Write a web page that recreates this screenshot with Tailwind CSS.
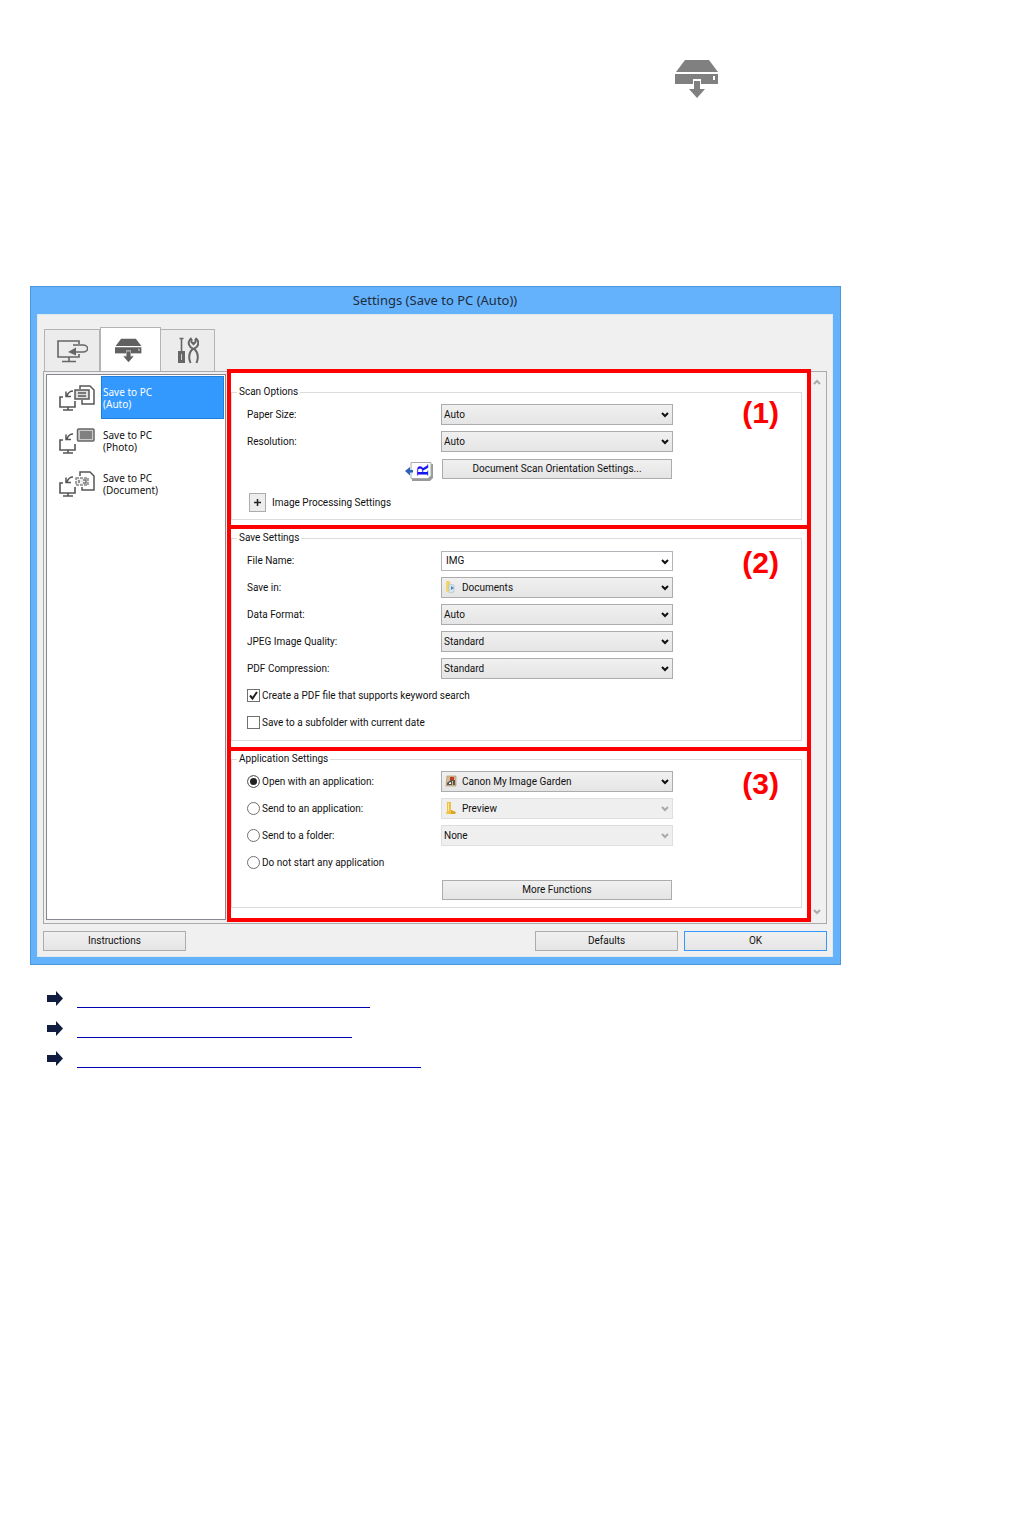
<!DOCTYPE html>
<html lang="en">
<head>
  <meta charset="UTF-8" />
  <meta name="viewport" content="width=device-width, initial-scale=1.0"/>
  <title>Settings (Save to PC (Auto))</title>
  <script src="https://cdn.jsdelivr.net/npm/@tailwindcss/browser@4"></script>
</head>
<body class="bg-white min-h-screen px-[30px] pt-[59px] font-[Roboto,sans-serif] text-[10px] leading-3 text-[#111]">

  <!-- Shared icons -->
  <svg class="hidden" aria-hidden="true">
    <symbol id="scanner" viewBox="0 0 44 39">
      <path fill="#808080" d="M10 1h24l9 12H1z"/>
      <path fill="#808080" d="M0 15h43v10H0z"/>
      <path fill="#fff" d="M38 17h2v4h-2zM18 20h8v9h5l-9 11-9-11h5z"/>
      <path fill="#808080" d="M19 22h6v8h5l-8 9-8-9h5z"/>
    </symbol>
    <symbol id="chevron" viewBox="0 0 8 6">
      <path fill="none" stroke="currentColor" stroke-width="2" d="M1 1l3 3 3-3"/>
    </symbol>
    <symbol id="pc" viewBox="0 0 36 26">
      <path fill="none" stroke="#555" stroke-width="1.6" d="M4 12H1v10h15v-6M9 22v3M4 25h10"/>
      <path fill="none" stroke="#555" stroke-width="1.5" d="M14 6c-3 0-5 2-6 5M7 6.500v5h5"/>
    </symbol>
    <symbol id="arrow" viewBox="0 0 16 15">
      <path fill="#101c40" d="M0 4h9V0l7 7.500L9 15v-4H0z"/>
    </symbol>
  </svg>

  <header class="w-full max-w-[811px] flex justify-end pr-[122px]">
    <svg class="w-11 h-[39px]" role="img" aria-label="Scanner"><use href="#scanner"/></svg>
  </header>

  <!-- Settings dialog -->
  <main class="mt-[188px] w-full max-w-[811px] bg-[#64b1fc] border border-[#4a97da] pl-1.5 pr-[7px] pb-[7px]">
    <h1 class="h-[27px] text-center font-['Noto_Sans',sans-serif] text-[13px] leading-[26px] text-[#1f2d3d]">Settings (Save to PC (Auto))</h1>

    <div class="bg-[#f0f0f0] border border-[#dfe9ee] px-[5px] pt-3 pb-[5px]">
      <!-- Tabs -->
      <div class="flex items-end pl-px" role="tablist">
        <button type="button" role="tab" aria-label="Scan from PC" class="w-14 h-[42px] border border-b-0 border-[#b4b4b4] bg-[#ececec] flex items-center justify-center">
          <svg class="w-8 h-6" viewBox="0 0 32 24" fill="none" stroke="#666" stroke-width="1.600">
            <path d="M23 5V2H2v16h21v-3M13 18v4M6 22.500h14"/>
            <path d="M17 6h10a4 3 0 010 7h-8"/>
            <path fill="#666" stroke="none" d="M12 13l8-4.500v8z"/>
          </svg>
        </button>
        <button type="button" role="tab" aria-selected="true" aria-label="Scan from operation panel" class="w-[61px] h-11 border border-b-0 border-[#b4b4b4] bg-white flex items-center justify-center pr-1">
          <svg class="w-[27px] h-6 brightness-75"><use href="#scanner"/></svg>
        </button>
        <button type="button" role="tab" aria-label="General settings" class="w-[54px] h-[42px] border border-b-0 border-l-0 border-[#b4b4b4] bg-[#ececec] flex items-center justify-center">
          <svg class="w-[22px] h-7" viewBox="0 0 22 28" fill="none" stroke="#666">
            <path stroke-width="1.600" d="M4.500 1v13M2.500 1.500h4"/>
            <path fill="#666" stroke="none" d="M1 14h7v12H1z"/>
            <path stroke="#ccc" stroke-width="1" d="M4.500 17v6"/>
            <path stroke-width="2" d="M14.500 1c-3 2-4 6-1 9l3 2 3-2c3-3 2-7-1-9M14.500 2v3l2 2 2-2V2M15.500 12c-4 4-4 9-2 14M17.500 12c4 4 4 9 2 14"/>
          </svg>
        </button>
      </div>

      <div class="flex border border-[#a9a9a9] pl-0.5 pb-px">
        <!-- Scan type list -->
        <nav class="w-[180px] shrink-0 my-0.5 mr-px border border-[#85898f] bg-white pt-px pr-px font-['Noto_Sans',sans-serif]">
          <a href="#auto" aria-current="page" class="flex h-[43px]">
            <span class="w-[54px] flex items-center justify-center pl-1.5">
              <svg class="w-9 h-[26px]" viewBox="0 0 36 26"><use href="#pc"/>
                <g fill="none" stroke="#555" stroke-width="1.500"><path d="M21 4V1h10l4 4v14H23v-4"/><path fill="#ddd" d="M16 5h14v9H16z"/><path d="M19 8h8M19 11h8"/></g>
              </svg>
            </span>
            <span class="flex-1 flex items-center pl-px bg-[#3399ff] border border-[#1f7fdb] text-white">Save to PC<br>(Auto)</span>
          </a>
          <a href="#photo" class="flex h-[43px]">
            <span class="w-[54px] flex items-center justify-center pl-1.5">
              <svg class="w-9 h-[26px]" viewBox="0 0 36 26"><use href="#pc"/>
                <rect x="18.500" y="1" width="16.500" height="12" rx="1" fill="#ccc" stroke="#666" stroke-width="1.500"/><path fill="#808080" d="M21 3h12v8H21z"/>
              </svg>
            </span>
            <span class="flex-1 flex items-center pl-0.5">Save to PC<br>(Photo)</span>
          </a>
          <a href="#document" class="flex h-[43px]">
            <span class="w-[54px] flex items-center justify-center pl-1.5">
              <svg class="w-9 h-[26px]" viewBox="0 0 36 26"><use href="#pc"/>
                <g fill="none" stroke="#555" stroke-width="1.500"><path d="M21 5V1h10l4 4v14H23v-3"/><path stroke="#888" fill="#eee" stroke-dasharray="3 1" d="M17 7h12v7H17z"/><path stroke="#777" d="M20 9v3M24 9h3v3h-3"/></g>
              </svg>
            </span>
            <span class="flex-1 flex items-center pl-0.5">Save to PC<br>(Document)</span>
          </a>
        </nav>

        <form class="flex-1 min-w-0 -mt-[3px] bg-white">
          <!-- Scan options -->
          <section class="relative border-4 border-[#ff0000] pt-3 pr-[5px] pb-[5px]">
            <fieldset class="border border-[#dcdcdc] px-[15px] pt-0.5 pb-[3px]">
              <legend class="-ml-2.5 px-0.5 h-3.5 leading-[14px]">Scan Options</legend>
              <div class="grid grid-cols-[194px_minmax(0,232px)] auto-rows-[27px] items-center">
                <label for="paper">Paper Size:</label>
                <div class="relative">
                  <select id="paper" class="block w-full h-[21px] appearance-none border border-[#acacac] bg-linear-to-b from-[#f0f0f0] to-[#e5e5e5] px-0.5"><option>Auto</option></select>
                  <svg class="absolute right-1 top-2 w-2 h-1.5 pointer-events-none"><use href="#chevron"/></svg>
                </div>
                <label for="resolution">Resolution:</label>
                <div class="relative">
                  <select id="resolution" class="block w-full h-[21px] appearance-none border border-[#acacac] bg-linear-to-b from-[#f0f0f0] to-[#e5e5e5] px-0.5"><option>Auto</option></select>
                  <svg class="absolute right-1 top-2 w-2 h-1.5 pointer-events-none"><use href="#chevron"/></svg>
                </div>
                <div class="flex justify-end pr-2">
                  <svg class="w-7 h-5 mt-1" viewBox="0 0 28 20">
                    <path fill="#999" d="M7 3h21v14l-3 3H7z"/>
                    <path fill="#fff" stroke="#aaa" d="M6 1.500h20v13l-3 3H6z"/>
                    <path fill="#2a62b8" d="M0 10l5-4v3h3v2.500H5v3z"/>
                    <text x="0" y="0" transform="translate(23 15) rotate(-90)" font-family="Liberation Serif" font-weight="bold" font-size="16" fill="#1414f0">R</text>
                  </svg>
                </div>
                <button type="button" class="h-5 mx-px border border-[#acacac] bg-linear-to-b from-[#f0f0f0] to-[#e5e5e5]">Document Scan Orientation Settings...</button>
              </div>
              <div class="mt-[7px] h-[27px] flex items-center gap-1.5 pl-0.5">
                <button type="button" id="processing" aria-expanded="false" aria-label="Expand" class="w-[17px] h-[19px] border border-[#acacac] bg-[#ededed] flex items-center justify-center">
                  <svg class="w-[7px] h-[7px]" viewBox="0 0 7 7"><path stroke="#222" stroke-width="1.500" d="M0 3.500h7M3.500 0v7"/></svg>
                </button>
                <label for="processing">Image Processing Settings</label>
              </div>
            </fieldset>
            <span class="absolute right-7 top-6 font-['Liberation_Sans',sans-serif] text-[30px] leading-8 text-[#ff0000] font-bold">(1)</span>
          </section>

          <!-- Save settings -->
          <section class="relative border-4 border-t-0 border-[#ff0000] pt-0.5 pr-[5px] pb-1.5">
            <fieldset class="border border-[#dcdcdc] px-[15px] pt-0.5 pb-1">
              <legend class="-ml-2.5 px-0.5 h-3.5 leading-[14px]">Save Settings</legend>
              <div class="grid grid-cols-[194px_minmax(0,232px)] auto-rows-[27px] items-center">
                <label for="file">File Name:</label>
                <div class="relative">
                  <input id="file" type="text" value="IMG" class="block w-full h-5 border border-[#b4b4ba] bg-white px-1">
                  <svg class="absolute right-1 top-2 w-2 h-1.5 pointer-events-none"><use href="#chevron"/></svg>
                </div>
                <label for="savein">Save in:</label>
                <div class="relative">
                  <select id="savein" class="block w-full h-[21px] appearance-none border border-[#acacac] bg-linear-to-b from-[#f0f0f0] to-[#e5e5e5] pl-5"><option>Documents</option></select>
                  <svg class="absolute left-1 top-1 w-3 h-3" viewBox="0 0 12 12"><path fill="#f3d36b" d="M1 0h4v10l-3 1-1-1z"/><path fill="#d9e6ef" stroke="#9db6c6" stroke-width=".5" d="M4 3l5 1v7l-5 1z"/><path fill="#3d8bc8" d="M6 5l3 2-3 2z"/></svg>
                  <svg class="absolute right-1 top-2 w-2 h-1.5 pointer-events-none"><use href="#chevron"/></svg>
                </div>
                <label for="format">Data Format:</label>
                <div class="relative">
                  <select id="format" class="block w-full h-[21px] appearance-none border border-[#acacac] bg-linear-to-b from-[#f0f0f0] to-[#e5e5e5] px-0.5"><option>Auto</option></select>
                  <svg class="absolute right-1 top-2 w-2 h-1.5 pointer-events-none"><use href="#chevron"/></svg>
                </div>
                <label for="quality">JPEG Image Quality:</label>
                <div class="relative">
                  <select id="quality" class="block w-full h-[21px] appearance-none border border-[#acacac] bg-linear-to-b from-[#f0f0f0] to-[#e5e5e5] px-0.5"><option>Standard</option></select>
                  <svg class="absolute right-1 top-2 w-2 h-1.5 pointer-events-none"><use href="#chevron"/></svg>
                </div>
                <label for="compression">PDF Compression:</label>
                <div class="relative">
                  <select id="compression" class="block w-full h-[21px] appearance-none border border-[#acacac] bg-linear-to-b from-[#f0f0f0] to-[#e5e5e5] px-0.5"><option>Standard</option></select>
                  <svg class="absolute right-1 top-2 w-2 h-1.5 pointer-events-none"><use href="#chevron"/></svg>
                </div>
                <label class="col-span-2 flex items-center gap-0.5">
                  <span class="relative w-[13px] h-[13px]">
                    <input type="checkbox" checked class="peer block w-[13px] h-[13px] appearance-none border border-[#707070] bg-white">
                    <svg class="absolute inset-0 hidden peer-checked:block pointer-events-none" viewBox="0 0 13 13"><path fill="none" stroke="#222" stroke-width="2" d="M3 6.500l2.500 3L10 3"/></svg>
                  </span>
                  Create a PDF file that supports keyword search
                </label>
                <label class="col-span-2 flex items-center gap-0.5">
                  <input type="checkbox" class="block w-[13px] h-[13px] appearance-none border border-[#707070] bg-white">
                  Save to a subfolder with current date
                </label>
              </div>
            </fieldset>
            <span class="absolute right-7 top-[18px] font-['Liberation_Sans',sans-serif] text-[30px] leading-8 text-[#ff0000] font-bold">(2)</span>
          </section>

          <!-- Application settings -->
          <section class="relative border-4 border-t-0 border-[#ff0000] pt-px pr-[5px] pb-2.5">
            <fieldset class="border border-[#dcdcdc] px-[15px] pt-0.5 pb-1">
              <legend class="-ml-2.5 px-0.5 h-3.5 leading-[14px]">Application Settings</legend>
              <div class="grid grid-cols-[194px_minmax(0,232px)] auto-rows-[27px] items-center">
                <label class="flex items-center gap-0.5">
                  <input type="radio" name="app" checked class="w-[13px] h-[13px] appearance-none rounded-full border border-[#707070] bg-[#222] shadow-[inset_0_0_0_2px_white]">
                  Open with an application:
                </label>
                <div class="relative">
                  <select aria-label="Open with an application" class="block w-full h-[21px] appearance-none border border-[#acacac] bg-linear-to-b from-[#f0f0f0] to-[#e5e5e5] pl-5"><option>Canon My Image Garden</option></select>
                  <svg class="absolute left-1 top-1 w-3 h-3" viewBox="0 0 12 12"><path fill="#d8b98a" stroke="#a98a62" stroke-width=".6" d="M2 1h9v10H1z"/><path fill="#c23a2b" d="M5 2h4v4H5z"/><path fill="#555" d="M2 8l5-4v6H2zM8 5h2v5H8z"/><path fill="#fff" d="M4 8l2-1v2H4z"/></svg>
                  <svg class="absolute right-1 top-2 w-2 h-1.5 pointer-events-none"><use href="#chevron"/></svg>
                </div>
                <label class="flex items-center gap-0.5">
                  <input type="radio" name="app" class="w-[13px] h-[13px] appearance-none rounded-full border border-[#707070] bg-white">
                  Send to an application:
                </label>
                <div class="relative">
                  <select aria-label="Send to an application" disabled class="block w-full h-[21px] appearance-none border border-[#dedede] bg-[#efefef] opacity-100 pl-5"><option>Preview</option></select>
                  <svg class="absolute left-1 top-1 w-3 h-3" viewBox="0 0 12 12"><path fill="#f0c040" d="M2 0h4v8l4 2-2 2H1l1-3z"/><path fill="#fae6a0" d="M3 1h1v8H3z"/><path fill="#d9a520" d="M6 8l5 2-1 2H6z"/></svg>
                  <svg class="absolute right-1 top-2 w-2 h-1.5 text-[#aaa] pointer-events-none"><use href="#chevron"/></svg>
                </div>
                <label class="flex items-center gap-0.5">
                  <input type="radio" name="app" class="w-[13px] h-[13px] appearance-none rounded-full border border-[#707070] bg-white">
                  Send to a folder:
                </label>
                <div class="relative">
                  <select aria-label="Send to a folder" disabled class="block w-full h-[21px] appearance-none border border-[#dedede] bg-[#efefef] opacity-100 px-0.5"><option>None</option></select>
                  <svg class="absolute right-1 top-2 w-2 h-1.5 text-[#aaa] pointer-events-none"><use href="#chevron"/></svg>
                </div>
                <label class="col-span-2 flex items-center gap-0.5">
                  <input type="radio" name="app" class="w-[13px] h-[13px] appearance-none rounded-full border border-[#707070] bg-white">
                  Do not start any application
                </label>
                <button type="button" class="col-start-2 h-5 mx-px border border-[#acacac] bg-linear-to-b from-[#f0f0f0] to-[#e5e5e5]">More Functions</button>
              </div>
            </fieldset>
            <span class="absolute right-7 top-[17px] font-['Liberation_Sans',sans-serif] text-[30px] leading-8 text-[#ff0000] font-bold">(3)</span>
          </section>
        </form>

        <!-- Scroll bar -->
        <div class="w-[15px] shrink-0 flex flex-col items-center justify-between py-[7px] pr-1 text-[#aaa]">
          <svg class="w-2 h-1.5 rotate-180"><use href="#chevron"/></svg>
          <svg class="w-2 h-1.5"><use href="#chevron"/></svg>
        </div>
      </div>

      <!-- Dialog buttons -->
      <div class="mt-[7px] flex gap-1.5">
        <button type="button" class="w-[143px] h-5 mr-auto border border-[#acacac] bg-linear-to-b from-[#f0f0f0] to-[#e5e5e5]">Instructions</button>
        <button type="button" class="w-[143px] h-5 border border-[#acacac] bg-linear-to-b from-[#f0f0f0] to-[#e5e5e5]">Defaults</button>
        <button type="button" class="w-[143px] h-5 border border-[#3399ff] bg-linear-to-b from-[#f0f0f0] to-[#e5e5e5]">OK</button>
      </div>
    </div>
  </main>

  <!-- Links to each section -->
  <ul class="mt-[18px] pl-[17px]">
    <li class="flex items-center gap-3.5 h-[30px]">
      <svg class="w-4 h-[15px]"><use href="#arrow"/></svg>
      <a href="#scan-options" aria-label="Scan Options" class="w-[293px] h-[18px] mt-0.5 border-b border-[#0000b0]"></a>
    </li>
    <li class="flex items-center gap-3.5 h-[30px]">
      <svg class="w-4 h-[15px]"><use href="#arrow"/></svg>
      <a href="#save-settings" aria-label="Save Settings" class="w-[275px] h-[18px] mt-0.5 border-b border-[#0000b0]"></a>
    </li>
    <li class="flex items-center gap-3.5 h-[30px]">
      <svg class="w-4 h-[15px]"><use href="#arrow"/></svg>
      <a href="#application-settings" aria-label="Application Settings" class="w-[344px] h-[18px] mt-0.5 border-b border-[#0000b0]"></a>
    </li>
  </ul>

</body>
</html>
